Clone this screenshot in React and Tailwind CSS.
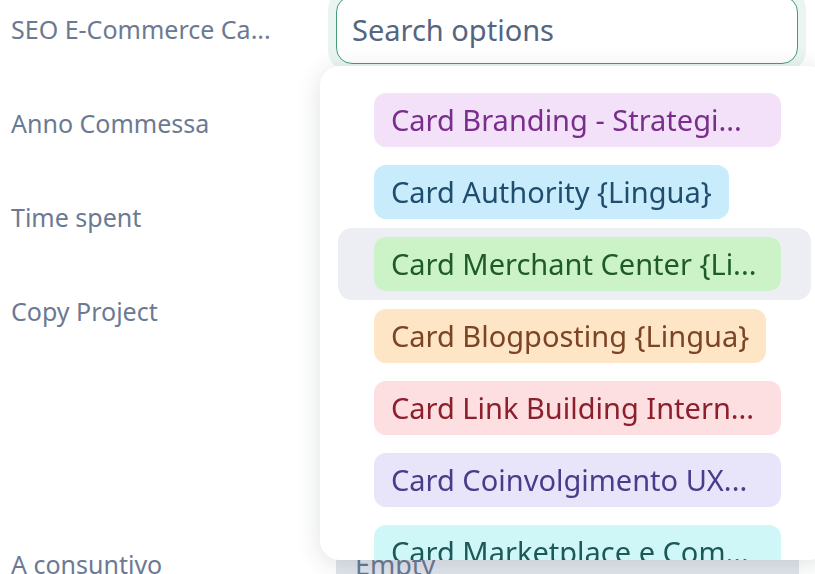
import { useState } from 'react';

const properties = [
  { label: 'SEO E-Commerce Ca...', height: 'h-[94px]' },
  { label: 'Anno Commessa', height: 'h-[94px]' },
  { label: 'Time spent', height: 'h-[94px]' },
  { label: 'Copy Project', height: 'h-[94px]' },
];

// truncated names fill the chip's max width, like the original
const options = [
  { id: 1, name: 'Card Branding - Strategi...', chip: 'w-[407px] bg-[#f3e1f9] text-[#7a2e8c]' },
  { id: 2, name: 'Card Authority {Lingua}', chip: 'bg-[#c8ecfc] text-[#1f4d6d]' },
  { id: 3, name: 'Card Merchant Center {Li...', chip: 'w-[407px] bg-[#ccf3c7] text-[#1f5a2b]' },
  { id: 4, name: 'Card Blogposting {Lingua}', chip: 'bg-[#fde5c5] text-[#7b4425]' },
  { id: 5, name: 'Card Link Building Intern...', chip: 'w-[407px] bg-[#fddee1] text-[#8c1f2c]' },
  { id: 6, name: 'Card Coinvolgimento UX...', chip: 'w-[407px] bg-[#e8e4fa] text-[#4b3b8b]' },
  { id: 7, name: 'Card Marketplace e Com...', chip: 'w-[407px] bg-[#d0f7f8] text-[#1d5858]' },
];

const App = () => {
  const [query, setQuery] = useState('');
  const [hovered, setHovered] = useState(3);

  return (
    <div
      className="relative w-[815px] h-[574px] overflow-hidden bg-white"
      style={{ fontFamily: '"Segoe UI", "Noto Sans", sans-serif' }}
    >
      {/* property list */}
      <div className="-mt-[17px] flex flex-col">
        {properties.map((prop, i) => (
          <div key={prop.label} className={`flex items-center ${prop.height}`}>
            <div className="w-[320px] shrink-0 pl-[11px] text-[25px] text-[#6b7a92]">
              {prop.label}
            </div>
            {i === 0 && (
              <div className="ml-[8px] w-[478px] rounded-[22px] bg-[#eaf4f0] p-[8px]">
                <div className="flex h-[68px] items-center rounded-[16px] border-[1.5px] border-[#479c77] bg-white px-[15px]">
                  <input
                    autoFocus
                    value={query}
                    onChange={(e) => setQuery(e.target.value)}
                    placeholder="Search options"
                    className="w-full bg-transparent text-[29px] text-[#2f3b4f] caret-[#2f8a62] outline-none placeholder:text-[#55657f]"
                  />
                </div>
              </div>
            )}
          </div>
        ))}
        <div className="h-[159px]" />
        <div className="flex h-[94px] items-center">
          <div className="w-[320px] shrink-0 pl-[11px] text-[25px] text-[#6b7a92]">A consuntivo</div>
          <div className="ml-[16px] flex h-[60px] w-[463px] items-center rounded-[12px] bg-[#e1e5ec] px-[19px] text-[27px] text-[#6b7a92]">
            Empty
          </div>
        </div>
      </div>

      {/* options popover */}
      <div className="absolute left-[320px] top-[66px] h-[494px] w-[509px] overflow-hidden rounded-[20px] bg-white px-[18px] pt-[18px] shadow-[0_4px_24px_rgba(30,41,59,0.14)]">
        {options.map((opt) => (
          <div
            key={opt.id}
            onMouseEnter={() => setHovered(opt.id)}
            className={`flex h-[72px] items-center rounded-[14px] pl-[36px] ${
              hovered === opt.id ? 'bg-[#eceef3]' : ''
            }`}
          >
            <span
              className={`flex h-[54px] items-center overflow-hidden whitespace-nowrap rounded-[12px] px-[17px] text-[29px] ${opt.chip}`}
            >
              {opt.name}
            </span>
          </div>
        ))}
      </div>
    </div>
  );
};

export default App;
